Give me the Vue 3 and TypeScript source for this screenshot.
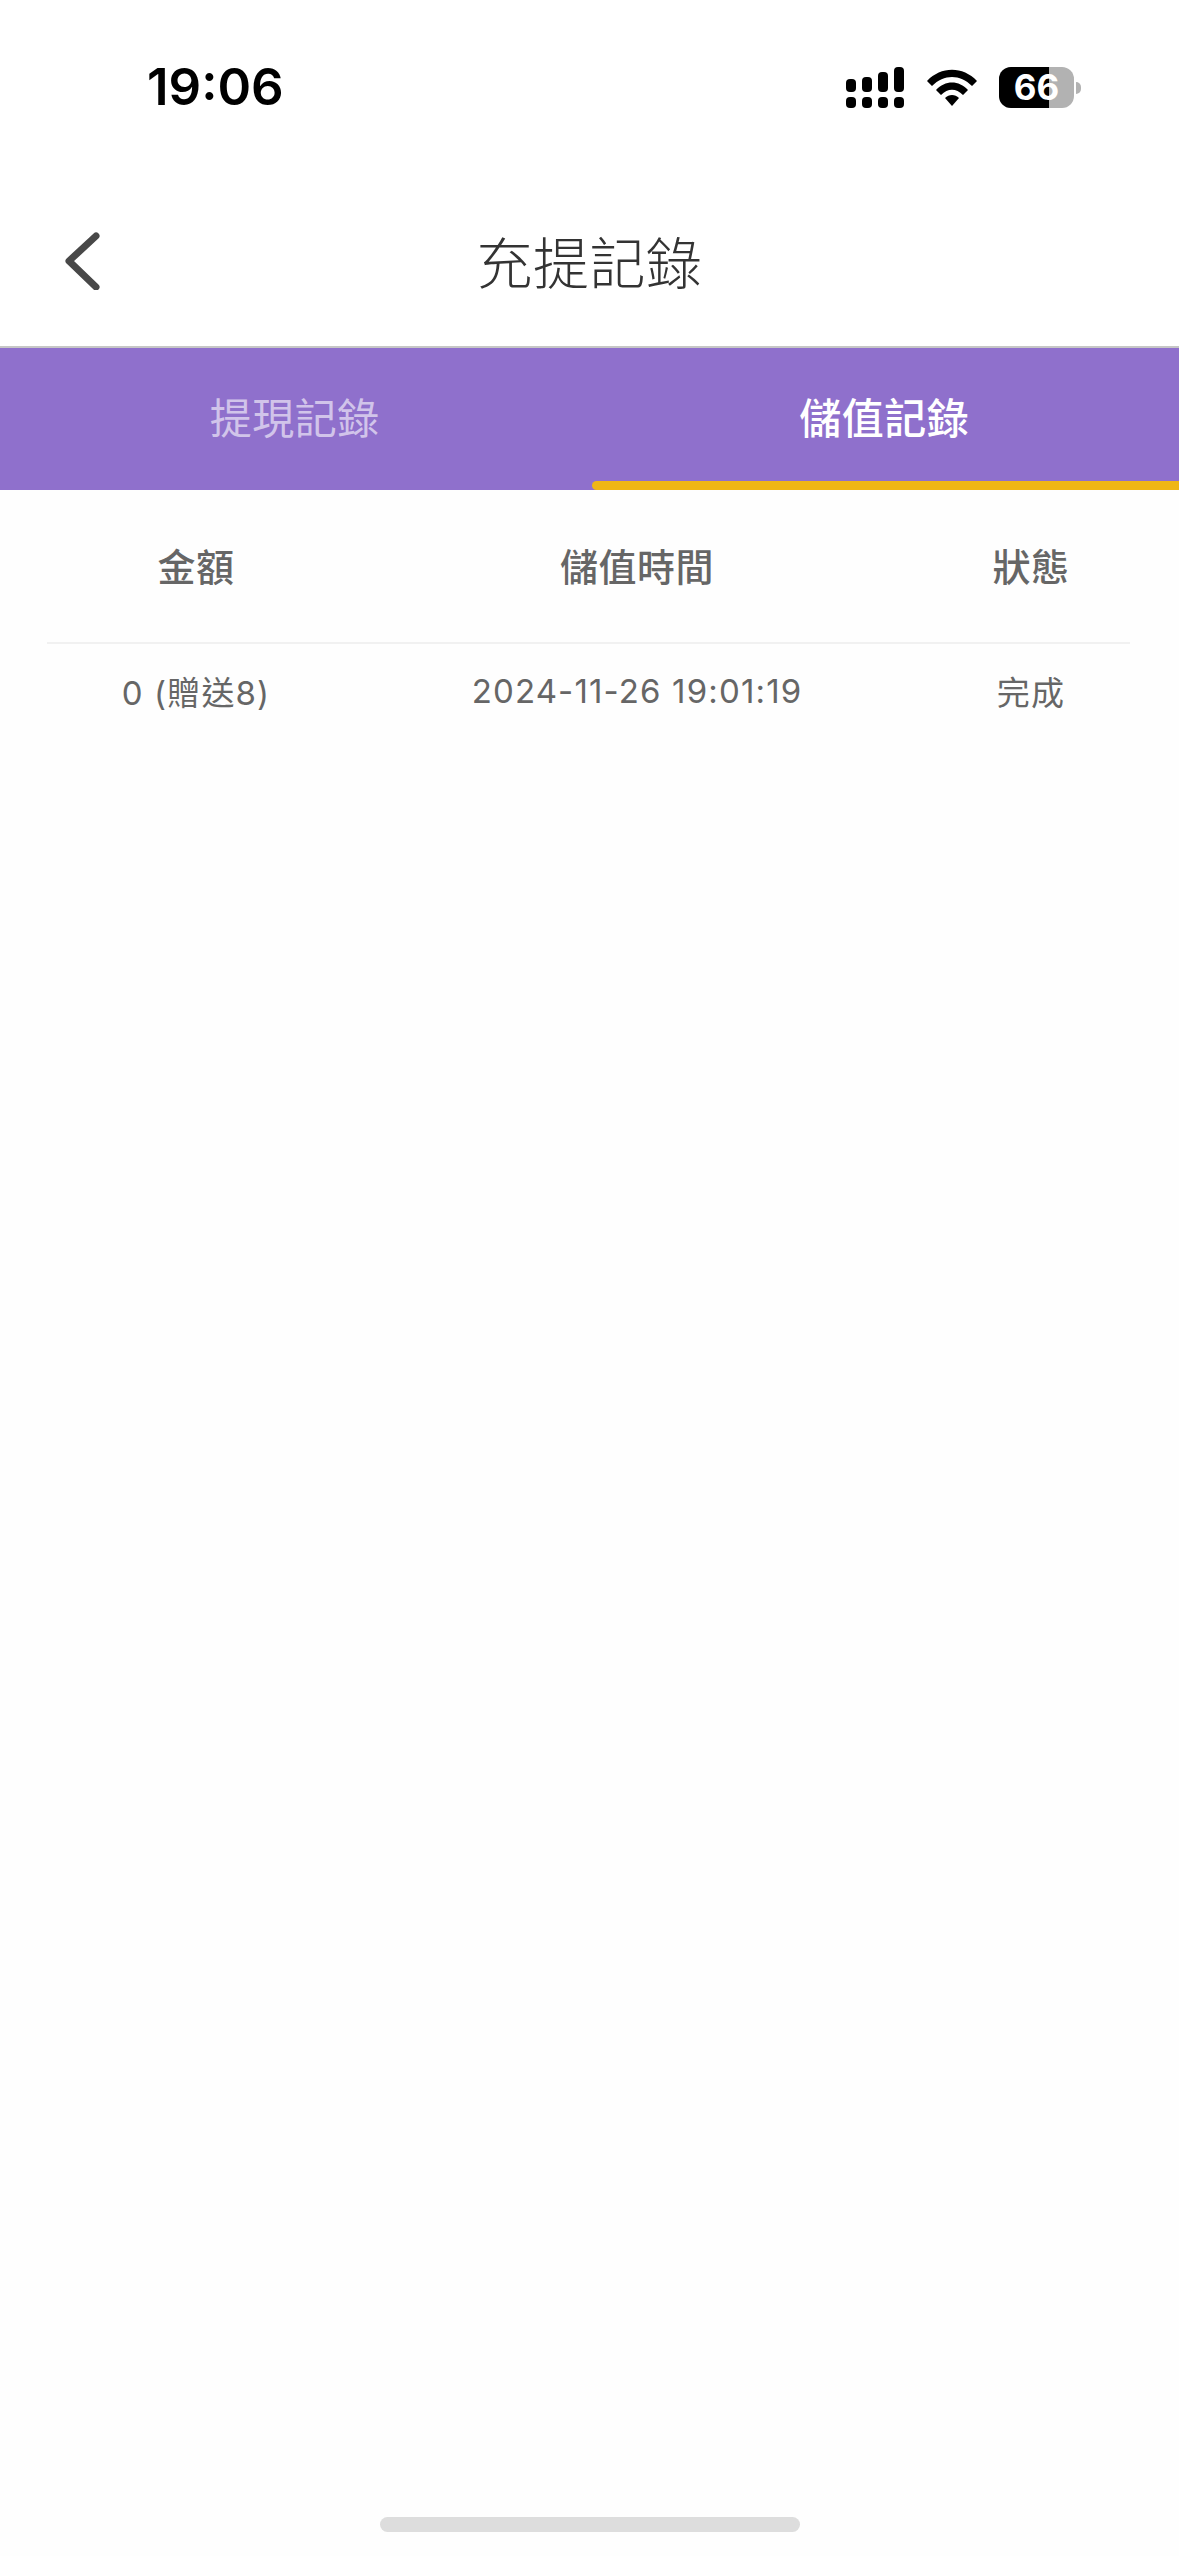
<script setup lang="ts">
interface Column { label: string; value: string }
const columns: Column[] = [
  { label: '金額', value: '0 (贈送8)' },
  { label: '儲值時間', value: '2024-11-26 19:01:19' },
  { label: '狀態', value: '完成' },
]
const signal = [
  { x: 846, y: 79, h: 13 },
  { x: 862, y: 77, h: 15 },
  { x: 878, y: 72, h: 20 },
  { x: 894, y: 67, h: 25 },
]
</script>

<template>
  <div class="page">
    <div class="status">
      <span class="time">19:06</span>
      <div class="status-icons">
        <svg class="signal" width="58" height="41" viewBox="846 67 58 41" aria-hidden="true">
          <g v-for="s in signal" :key="s.x">
            <rect :x="s.x" :y="s.y" width="10" :height="s.h" rx="4" fill="#000" />
            <rect :x="s.x" y="97" width="10" height="11" rx="4" fill="#000" />
          </g>
        </svg>
        <svg class="wifi" width="50" height="37" viewBox="0 0 50 37" aria-hidden="true">
          <path d="M0 12 C14 -3 36 -3 50 12 L45 17 C33 5 17 5 5 17 Z" fill="#000" />
          <path d="M9 21 C18 11 32 11 41 21 L36 26 C29 19 21 19 14 26 Z" fill="#000" />
          <path d="M18 29 C22 25 28 25 32 29 L25 37 Z" fill="#000" />
        </svg>
        <div class="battery">
          <div class="battery-body"><span class="battery-level"></span><span class="battery-text">66</span></div>
          <span class="battery-nub"></span>
        </div>
      </div>
    </div>

    <header class="nav">
      <svg class="back" width="36" height="60" viewBox="0 0 36 60" aria-hidden="true">
        <path d="M31 6 L4 31 L31 57" fill="none" stroke="#484848" stroke-width="7" stroke-linecap="round" stroke-linejoin="round" />
      </svg>
      <h1 class="title">充提記錄</h1>
    </header>

    <nav class="tabs">
      <div class="tab">提現記錄</div>
      <div class="tab active">儲值記錄</div>
    </nav>

    <section class="table">
      <div class="row head">
        <div v-for="c in columns" :key="c.label" class="cell">{{ c.label }}</div>
      </div>
      <div class="row body">
        <div v-for="c in columns" :key="c.label" class="cell">{{ c.value }}</div>
      </div>
    </section>

    <div class="home"></div>
  </div>
</template>

<style scoped>
.page {
  width: 1179px;
  height: 2556px;
  display: flex;
  flex-direction: column;
  background: #fefefe;
  font-family: "Noto Sans CJK TC", "Noto Sans", sans-serif;
  overflow: hidden;
}
.status {
  height: 130px;
  flex: none;
  box-sizing: border-box;
  display: flex;
  justify-content: space-between;
  align-items: flex-start;
  padding: 67px 98px 0 147px;
  background: #fff;
}
.time {
  font-family: Inter, "Liberation Sans", sans-serif;
  font-size: 51px;
  font-weight: 600;
  line-height: 40px;
  color: #000;
}
.status-icons {
  display: flex;
  align-items: flex-start;
}
.signal { display: block; }
.wifi { display: block; margin: 2px 22px 0 23px; }
.battery { display: flex; align-items: center; }
.battery-body {
  position: relative;
  width: 75px;
  height: 41px;
  border-radius: 12px;
  overflow: hidden;
  background: #b2b2b2;
}
.battery-level {
  position: absolute;
  left: 0;
  top: 0;
  bottom: 0;
  width: 50px;
  background: #000;
}
.battery-text {
  position: absolute;
  left: 0;
  right: 0;
  top: 0;
  text-align: center;
  font-family: Inter, "Liberation Sans", sans-serif;
  font-size: 35px;
  font-weight: 700;
  line-height: 41px;
  color: #fff;
}
.battery-nub {
  width: 5px;
  height: 12px;
  margin-left: 2px;
  border-radius: 0 6px 6px 0;
  background: #b2b2b2;
}
.nav {
  flex: none;
  box-sizing: border-box;
  height: 218px;
  display: grid;
  grid-template-columns: 1fr auto 1fr;
  align-items: center;
  padding-top: 44px;
  border-bottom: 2px solid #c6c6c6;
  background: #fff;
}
.back {
  display: block;
  margin-left: 65px;
}
.title {
  grid-column: 2;
  margin: 0;
  font-size: 56px;
  font-weight: 300;
  line-height: 72px;
  letter-spacing: 0.5px;
  color: #333;
}
.tabs {
  flex: none;
  height: 142px;
  display: grid;
  grid-template-columns: 1fr 1fr;
  background: #8f70cc;
}
.tab {
  display: flex;
  align-items: center;
  justify-content: center;
  padding-bottom: 8px;
  font-size: 42px;
  font-weight: 400;
  letter-spacing: 0.5px;
  color: rgba(255, 255, 255, 0.6);
}
.tab.active {
  position: relative;
  font-weight: 500;
  color: #fff;
}
.tab.active::after {
  content: "";
  position: absolute;
  left: 2px;
  right: 0;
  bottom: 0;
  height: 9px;
  border-radius: 5px 0 0 5px;
  background: #efb615;
}
.table {
  margin: 0 49px 0 47px;
  color: #666;
}
.row {
  display: grid;
  grid-template-columns: 298px 584px 201px;
  text-align: center;
}
.cell:last-child {
  padding-left: 3px;
}
.head {
  height: 154px;
  box-sizing: border-box;
  padding-bottom: 4px;
  align-items: center;
  border-bottom: 2px solid #f1f1f1;
  font-size: 38px;
  font-weight: 500;
  letter-spacing: 0.5px;
}
.body {
  height: 98px;
  box-sizing: border-box;
  padding-bottom: 4px;
  align-items: center;
  font-size: 33px;
  font-weight: 400;
  letter-spacing: 1.15px;
  font-family: Inter, "Noto Sans CJK TC", sans-serif;
}
.home {
  width: 420px;
  height: 15px;
  margin: auto auto 24px;
  border-radius: 8px;
  background: #ddd;
}
</style>
